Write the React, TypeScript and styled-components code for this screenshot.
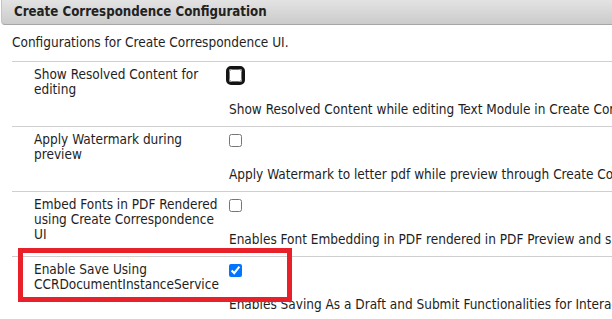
import React from 'react'
import styled, {createGlobalStyle} from 'styled-components'

const GlobalStyle = createGlobalStyle`
  html, body {
    margin: 0;
    padding: 0;
    background: #ffffff;
  }
  body {
    font-family: 'DejaVu Sans Condensed', 'DejaVu Sans', sans-serif;
    font-size: 13.5px;
    color: #1e1e1e;
    overflow: hidden;
  }
`

const Page = styled.div`
  width: 612px;
  height: 319px;
  overflow: hidden;
  background: #ffffff;
`

const Header = styled.div`
  margin-left: 1px;
  height: 24px;
  line-height: 24px;
  padding-left: 12px;
  font-weight: bold;
  font-size: 13.2px;
  color: #222222;
  background: linear-gradient(to bottom, #e3e3e3 0%, #cbcbcb 100%);
  border-bottom: 1px solid #a6a6a6;
  border-left: 1px solid #c4c4c4;
  border-bottom-left-radius: 4px;
  white-space: nowrap;
`

const Intro = styled.div`
  margin: 10px 0 11px 12px;
  line-height: 15px;
  white-space: nowrap;
`

const Table = styled.div`
  margin-left: 12px;
  display: flex;
  flex-direction: column;
`

const Row = styled.div`
  position: relative;
  display: grid;
  grid-template-columns: 195px 1fr;
  border-top: 1px solid #cfcfcf;
  padding-left: 22px;
  height: 64px;
`

const Label = styled.div`
  padding-top: 5px;
  line-height: 15px;
  width: 190px;
`

const Control = styled.div`
  display: flex;
  flex-direction: column;
  align-items: flex-start;
  min-width: 0;
`

const CheckRing = styled.span<{$focused?: boolean}>`
  display: inline-flex;
  margin: 4px 0 0 -3px;
  border: 3px solid ${(p) => (p.$focused ? '#141414' : 'transparent')};
  border-radius: 5px;
`

const Checkbox = styled.input.attrs({type: 'checkbox'})`
  width: 13px;
  height: 13px;
  margin: 0;
  outline: none;
`

const Description = styled.div`
  margin-top: 17px;
  line-height: 15px;
  white-space: nowrap;
`

const Highlight = styled.div`
  position: absolute;
  top: -9px;
  left: 6px;
  width: 274px;
  height: 54px;
  box-sizing: border-box;
  border: 5px solid #e8202a;
  pointer-events: none;
`

type Setting = {
  label: string
  description: string
  checked?: boolean
  focused?: boolean
  highlighted?: boolean
}

const settings: Setting[] = [
  {
    label: 'Show Resolved Content for editing',
    description: 'Show Resolved Content while editing Text Module in Create Correspondence UI',
    focused: true,
  },
  {
    label: 'Apply Watermark during preview',
    description: 'Apply Watermark to letter pdf while preview through Create Correspondence UI',
  },
  {
    label: 'Embed Fonts in PDF Rendered using Create Correspondence UI',
    description: 'Enables Font Embedding in PDF rendered in PDF Preview and submit',
  },
  {
    label: 'Enable Save Using CCRDocumentInstanceService',
    description: 'Enables Saving As a Draft and Submit Functionalities for Interactive Communications',
    checked: true,
    highlighted: true,
  },
]

export default function App() {
  return (
    <Page>
      <GlobalStyle />
      <Header>Create Correspondence Configuration</Header>
      <Intro>Configurations for Create Correspondence UI.</Intro>
      <Table>
        {settings.map((s) => (
          <Row key={s.label}>
            <Label>{s.label}</Label>
            <Control>
              <CheckRing $focused={s.focused}>
                <Checkbox defaultChecked={s.checked} />
              </CheckRing>
              <Description>{s.description}</Description>
            </Control>
            {s.highlighted && <Highlight />}
          </Row>
        ))}
      </Table>
    </Page>
  )
}
